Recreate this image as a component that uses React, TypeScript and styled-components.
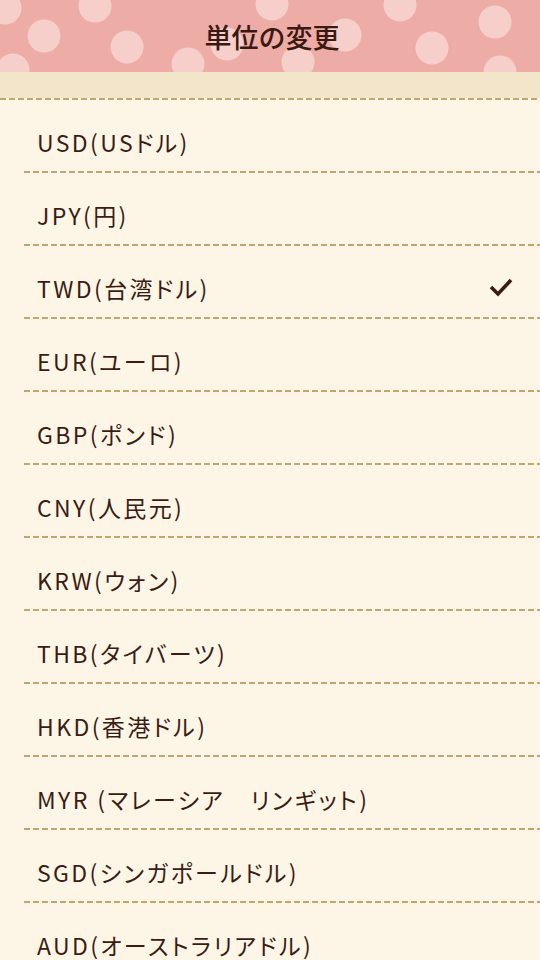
import { FC } from 'react';
import styled, { createGlobalStyle } from 'styled-components';

const GlobalStyle = createGlobalStyle`
  html, body {
    margin: 0;
    padding: 0;
    background: #fdf6e6;
  }
  body {
    font-family: "Noto Sans CJK JP", "Noto Sans", sans-serif;
    color: #3b1c14;
  }
`;

const Page = styled.div`
  width: 540px;
  height: 960px;
  overflow: hidden;
  background: #fdf6e6;
`;

const Header = styled.header`
  position: relative;
  height: 72px;
  background: #eeaca7;
  display: flex;
  align-items: center;
  justify-content: center;
  overflow: hidden;
`;

const Dots = styled.svg`
  position: absolute;
  inset: 0;
`;

const Title = styled.h1`
  position: relative;
  margin: 0 0 0 4px;
  font-size: 27px;
  font-weight: 500;
  letter-spacing: 0;
  color: #3a1911;
`;

const Band = styled.div`
  height: 26px;
  background: #f2e5ca;
`;

const Dashes = styled.div<{ $inset?: number }>`
  height: 2px;
  margin-left: ${(p) => p.$inset ?? 0}px;
  background-image: repeating-linear-gradient(
    to right,
    #c4a570 0,
    #c4a570 6px,
    transparent 6px,
    transparent 9px
  );
`;

const List = styled.ul`
  list-style: none;
  margin: 0;
  padding: 0;
`;

const Row = styled.li`
  display: flex;
  align-items: center;
  justify-content: space-between;
  height: 71px;
  box-sizing: border-box;
  padding: 29px 26px 16px 37px;
`;

const Label = styled.span`
  font-size: 23px;
  line-height: 26px;
  letter-spacing: 2.4px;
  font-feature-settings: "palt";
  white-space: pre;
`;

const Check = styled.svg`
  width: 26px;
  height: 20px;
  margin-top: -2px;
`;

const dots: [number, number][] = [
  [5, 8], [44, 36], [95, 6], [127, 47], [13, 70], [188, 64], [227, 44],
  [272, 4], [298, 62], [345, 35], [400, 5], [432, 48], [495, 22], [500, 72],
];

const currencies = [
  'USD(USドル)',
  'JPY(円)',
  'TWD(台湾ドル)',
  'EUR(ユーロ)',
  'GBP(ポンド)',
  'CNY(人民元)',
  'KRW(ウォン)',
  'THB(タイバーツ)',
  'HKD(香港ドル)',
  'MYR (マレーシア　リンギット)',
  'SGD(シンガポールドル)',
  'AUD(オーストラリアドル)',
];

const App: FC = () => {
  const selected = 'TWD(台湾ドル)';

  return (
    <Page>
      <GlobalStyle />
      <Header>
        <Dots width="540" height="72" viewBox="0 0 540 72">
          {dots.map(([cx, cy], i) => (
            <circle key={i} cx={cx} cy={cy} r="16.5" fill="#f6cfcb" />
          ))}
        </Dots>
        <Title>単位の変更</Title>
      </Header>
      <Band />
      <Dashes />
      <List>
        {currencies.map((c, i) => (
          <div key={c}>
            <Row>
              <Label>{c}</Label>
              {c === selected && (
                <Check viewBox="0 0 26 20">
                  <polyline
                    points="3,10 10,17 23,3"
                    fill="none"
                    stroke="#3b1c14"
                    strokeWidth="3.6"
                  />
                </Check>
              )}
            </Row>
            {i < currencies.length - 1 && <Dashes $inset={24} />}
          </div>
        ))}
      </List>
    </Page>
  );
};

export default App;
